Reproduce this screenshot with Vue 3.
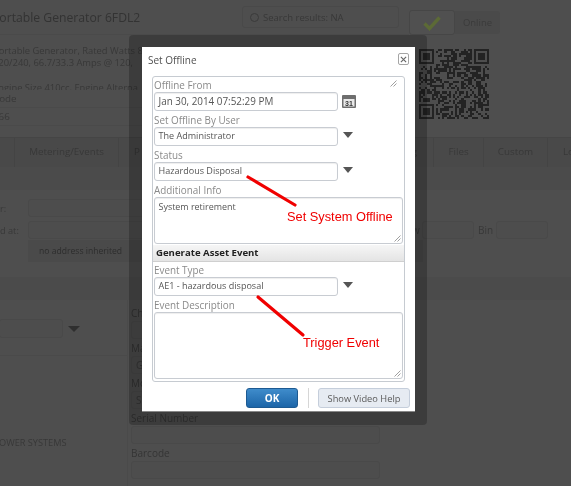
<script setup>
const size = 33
function finder(x, y) {
  return (r, c) => {
    const dx = c - x, dy = r - y
    if (dx < -1 || dy < -1 || dx > 7 || dy > 7) return null
    if (dx < 0 || dy < 0 || dx > 6 || dy > 6) return false
    if (dx === 0 || dy === 0 || dx === 6 || dy === 6) return true
    if (dx === 1 || dy === 1 || dx === 5 || dy === 5) return false
    return true
  }
}
const finders = [finder(0, 0), finder(26, 0), finder(0, 26)]
let seed = 7919
function rand() {
  seed = (seed * 16807) % 2147483647
  return seed / 2147483647
}
const modules = []
for (let r = 0; r < size; r++) {
  for (let c = 0; c < size; c++) {
    let v = null
    for (const f of finders) {
      const res = f(r, c)
      if (res !== null) v = res
    }
    if (v === null) v = rand() > 0.5
    if (v) modules.push({ x: c, y: r })
  }
}
</script>

<template>
  <div class="page">
    <section class="head">
      <div class="head-left">
        <div class="title-row">
          <h1 class="title">Portable Generator 6FDL2</h1>
          <div class="search">
            <span class="ring"></span>
            <span>Search results: NA</span>
          </div>
        </div>
        <p class="desc">Portable Generator, Rated Watts 8<br />120/240, 66.7/33.3 Amps @ 120,</p>
        <p class="desc engine">Engine Size 410cc, Engine Alterna</p>
        <div class="meta">Code</div>
        <div class="meta">466</div>
      </div>
      <div class="head-right">
        <div class="status">
          <div class="check">
            <svg width="20" height="16" viewBox="0 0 20 16"><path d="M2.5 8.5 L7.5 13.5 L17.5 2.5" fill="none" stroke="#5c6a36" stroke-width="3.4" /></svg>
          </div>
          <div class="online">Online</div>
        </div>
        <svg class="qr" width="70" height="70" viewBox="0 0 33 33" shape-rendering="crispEdges">
          <rect v-for="(m, i) in modules" :key="i" :x="m.x" :y="m.y" width="1" height="1" fill="#232323" />
        </svg>
      </div>
    </section>

    <nav class="tabs">
      <span class="tab" style="width: 15px"></span>
      <span class="tab" style="width: 104px">Metering/Events</span>
      <span class="tab wide"><span>P</span><span>g</span></span>
      <span class="tab" style="width: 50px">Files</span>
      <span class="tab" style="width: 64px">Custom</span>
      <span class="tab last">Location</span>
    </nav>
    <div class="band top-band"></div>

    <section class="form">
      <div class="row">
        <span class="row-label">r:</span>
        <span class="box main-box"></span>
      </div>
      <div class="row second">
        <span class="row-label">d at:</span>
        <span class="box main-box"></span>
        <span class="row-w">w</span>
        <span class="box small-box"></span>
        <span class="bin">Bin</span>
        <span class="box small-box bin-box"></span>
      </div>
      <div class="row third">
        <span class="address">no address inherited</span>
      </div>
    </section>
    <div class="band lower-band"></div>

    <section class="lower">
      <div class="lower-left">
        <div class="lower-select">
          <span class="box select-box"></span>
          <span class="tri dark"></span>
        </div>
        <div class="panel"><span class="power">POWER SYSTEMS</span></div>
      </div>
      <div class="lower-right">
        <span class="bg-label">Ch</span><span class="box wide-box"></span>
        <span class="bg-label">Ma</span><span class="box wide-box">G</span>
        <span class="bg-label">Mo</span><span class="box wide-box">S</span>
        <span class="bg-label">Serial Number</span><span class="box wide-box"></span>
        <span class="bg-label">Barcode</span><span class="box wide-box"></span>
      </div>
    </section>

    <div class="frame">
      <div class="modal">
        <header class="modal-head">
          <span>Set Offline</span>
          <button class="close" aria-label="Close">
            <svg width="7" height="7" viewBox="0 0 8 8"><path d="M1 1 L7 7 M7 1 L1 7" stroke="#666" stroke-width="1.3" /></svg>
          </button>
        </header>

        <div class="fields">
          <svg class="grip top-grip" width="7" height="7" viewBox="0 0 7 7"><path d="M0.5 6.5 L6.5 0.5 M3.5 6.5 L6.5 3.5" stroke="#888" stroke-width="0.8" /></svg>

          <div class="group first">
            <label>Offline From</label>
            <div class="line">
              <div class="input date">Jan 30, 2014 07:52:29 PM</div>
              <svg class="cal" width="14" height="13" viewBox="0 0 14 13">
                <rect x="0" y="0" width="14" height="13" rx="1" fill="#6e6e6e" />
                <rect x="1.5" y="4" width="11" height="7.5" fill="#e9e9e9" />
                <text x="7" y="10.6" font-size="7" font-weight="700" text-anchor="middle" fill="#333" font-family="Liberation Sans, sans-serif">31</text>
              </svg>
            </div>
          </div>

          <div class="group">
            <label>Set Offline By User</label>
            <div class="line">
              <div class="input">The Administrator</div>
              <span class="tri"></span>
            </div>
          </div>

          <div class="group">
            <label>Status</label>
            <div class="line">
              <div class="input">Hazardous Disposal</div>
              <span class="tri"></span>
            </div>
          </div>

          <div class="group">
            <label>Additional Info</label>
            <div class="area info">System retirement
              <svg class="grip" width="7" height="7" viewBox="0 0 7 7"><path d="M0.5 6.5 L6.5 0.5 M3.5 6.5 L6.5 3.5" stroke="#888" stroke-width="0.8" /></svg>
            </div>
          </div>

          <div class="section-head">Generate Asset Event</div>

          <div class="group event">
            <label>Event Type</label>
            <div class="line">
              <div class="input">AE1 - hazardous disposal</div>
              <span class="tri"></span>
            </div>
          </div>

          <div class="group">
            <label>Event Description</label>
            <div class="area descr">
              <svg class="grip" width="7" height="7" viewBox="0 0 7 7"><path d="M0.5 6.5 L6.5 0.5 M3.5 6.5 L6.5 3.5" stroke="#888" stroke-width="0.8" /></svg>
            </div>
          </div>
        </div>

        <footer class="actions">
          <button class="ok">OK</button>
          <span class="sep"></span>
          <button class="help">Show Video Help</button>
        </footer>
      </div>
    </div>

    <svg class="marks" width="571" height="486" viewBox="0 0 571 486">
      <path d="M248 177 L295 205" stroke="#f00000" stroke-width="3.2" stroke-linecap="round" />
      <path d="M258 297 L303 335" stroke="#f00000" stroke-width="3.2" stroke-linecap="round" />
    </svg>
    <span class="note note-one">Set System Offline</span>
    <span class="note note-two">Trigger Event</span>
  </div>
</template>

<style>
html, body { margin: 0; background: #4e4e4e; }
</style>

<style scoped>
.page {
  position: relative;
  width: 571px;
  height: 486px;
  overflow: hidden;
  background: #4e4e4e;
  color: #383838;
  font-family: "Open Sans", sans-serif;
  font-size: 10px;
  filter: blur(0.35px);
}
.head { display: flex; height: 137px; }
.head-left { width: 409px; flex: none; }
.head-right { flex: 1; padding-top: 10px; }
.title-row { display: flex; height: 34px; border-bottom: 1px solid #4a4a4a; align-items: center; margin-bottom: 10px; }
.title {
  margin: 0 0 0 -8px;
  width: 250px;
  flex: none;
  font-size: 12.2px;
  font-weight: 400;
  color: #333;
  white-space: nowrap;
}
.search {
  box-sizing: border-box;
  width: 157px;
  height: 22px;
  border: 1px solid #494949;
  border-radius: 3px;
  display: flex;
  align-items: center;
  gap: 4px;
  padding-left: 7px;
  font-size: 9.5px;
}
.ring { width: 7px; height: 7px; border: 1.5px solid #3a3a3a; border-radius: 50%; }
.desc {
  margin: 0 0 0 -7px;
  font-size: 9.4px;
  line-height: 12px;
  white-space: nowrap;
}
.engine { margin-top: 14px; height: 7px; overflow: hidden; line-height: 9px; }
.meta {
  height: 17px;
  line-height: 17px;
  margin-left: -7px;
  border-bottom: 1px solid #4a4a4a;
  font-size: 9.8px;
}
.status { display: flex; align-items: center; height: 25px; }
.check {
  box-sizing: border-box;
  width: 46px;
  height: 25px;
  border: 1px solid #464646;
  border-radius: 3px;
  background: #505050;
  display: flex;
  align-items: center;
  justify-content: center;
}
.online {
  box-sizing: border-box;
  width: 45px;
  height: 23px;
  background: #4a4a4a;
  border-radius: 0 3px 3px 0;
  text-align: center;
  line-height: 23px;
  color: #3b3b3b;
  font-size: 9.5px;
}
.qr { display: block; margin: 14px 0 0 10px; }
.tabs {
  display: flex;
  height: 30px;
  background: #494949;
  border-top: 1px solid #454545;
  box-sizing: border-box;
}
.tab {
  flex: none;
  box-sizing: border-box;
  border-right: 1px solid #444;
  text-align: center;
  line-height: 28px;
  white-space: nowrap;
  font-size: 9.8px;
}
.tab.wide { width: 315px; display: flex; justify-content: space-between; padding: 0 16px 0 15px; }
.tab.last { width: 40px; border-right: 0; text-align: left; padding-left: 15px; }
.band { background: #4b4b4b; }
.top-band { height: 23px; }
.form { height: 87px; padding-top: 9px; box-sizing: border-box; }
.row { display: flex; align-items: center; height: 18px; }
.row.second { margin-top: 4px; }
.row.third { margin-top: 1px; height: 22px; }
.row-label { width: 28px; flex: none; white-space: nowrap; font-size: 9.2px; }
.box {
  box-sizing: border-box;
  display: block;
  height: 18px;
  border: 1px solid #494949;
  border-radius: 3px;
  background: #4d4d4d;
  flex: none;
  padding-left: 4px;
  line-height: 16px;
}
.main-box { width: 384px; }
.row-w { width: 10px; flex: none; }
.small-box { width: 52px; }
.bin { margin-left: 4px; width: 18px; flex: none; }
.bin-box { width: 52px; }
.address {
  margin-left: 28px;
  width: 395px;
  height: 22px;
  background: #4a4a4a;
  padding-left: 11px;
  box-sizing: border-box;
  line-height: 22px;
  font-size: 8.6px;
  color: #2d2d2d;
}
.lower-band { height: 23px; }
.lower { display: flex; height: 186px; }
.lower-left { width: 128px; flex: none; border-right: 1px solid #4a4a4a; box-sizing: border-box; }
.lower-select { display: flex; align-items: center; margin-top: 19px; height: 19px; }
.select-box { width: 64px; height: 19px; margin-left: -1px; }
.tri { flex: none; width: 0; height: 0; margin-left: 5px; border-left: 5.5px solid transparent; border-right: 5.5px solid transparent; border-top: 6px solid #555; }
.tri.dark { border-top-color: #2f2f2f; border-left-width: 6px; border-right-width: 6px; }
.panel { border-top: 1px solid #4a4a4a; margin-top: 17px; padding-top: 80px; }
.power { font-size: 9.2px; margin-left: -6.5px; white-space: nowrap; display: block; line-height: 14px; }
.lower-right { display: flex; flex-direction: column; padding: 4px 0 0 3px; }
.bg-label { height: 15px; line-height: 14px; margin-top: 2px; color: #353535; }
.wide-box { width: 249px; }

.frame {
  position: absolute;
  left: 129px;
  top: 35px;
  width: 298px;
  height: 390px;
  box-sizing: border-box;
  padding: 12px 12px 13px 13px;
  background: rgba(0, 0, 0, 0.22);
  border-radius: 4px;
}
.modal {
  box-sizing: border-box;
  height: 365px;
  background: #fff;
  border-bottom: 1px solid #888;
  padding: 0 5px 0 10px;
  color: #555;
  display: flex;
  flex-direction: column;
}
.modal-head {
  display: flex;
  justify-content: space-between;
  align-items: flex-start;
  height: 29px;
  padding-top: 6px;
  box-sizing: border-box;
  font-size: 10px;
  color: #505050;
  margin-left: -4px;
  line-height: 15px;
}
.close {
  box-sizing: border-box;
  width: 11px;
  height: 12px;
  padding: 0;
  margin-right: 1px;
  background: #fff;
  border: 1px solid #a5a5a5;
  border-radius: 2px;
  display: flex;
  align-items: center;
  justify-content: center;
}
.fields {
  position: relative;
  box-sizing: border-box;
  width: 253px;
  height: 306px;
  padding: 1px 1px 0 1px;
  border: 1px solid #c6cbd1;
  border-radius: 3px;
  flex: none;
}
.top-grip { position: absolute; right: 7px; top: 3px; }
.group { margin-top: 2.5px; }
.group.first { margin-top: 0; }
.group.event { margin-top: 1px; }
label { display: block; height: 14px; line-height: 14px; color: #8a8a8a; font-size: 9.9px; white-space: nowrap; }
.line { display: flex; align-items: center; }
.input {
  box-sizing: border-box;
  width: 184px;
  height: 18.5px;
  flex: none;
  border: 1px solid #c8ccd2;
  border-radius: 3px;
  padding-left: 3.5px;
  line-height: 16.5px;
  font-size: 9.05px;
  color: #555;
  white-space: nowrap;
  box-shadow: inset 0 1px 1px #eee;
}
.input.date { font-size: 9.9px; }
.line .tri { margin-left: 5px; margin-top: -3px; }
.cal { margin-left: 4px; }
.area {
  position: relative;
  box-sizing: border-box;
  width: 248.5px;
  border: 1px solid #c8ccd2;
  border-radius: 3px;
  padding: 1px 3.5px;
  font-size: 8.95px;
  line-height: 15px;
  color: #555;
  box-shadow: inset 0 1px 1px #eee;
}
.area .grip { position: absolute; right: 1px; bottom: 1px; }
.info { height: 47px; }
.descr { height: 67px; }
.section-head {
  margin: 1px -1px 0 -1px;
  height: 16px;
  line-height: 16px;
  padding-left: 3px;
  background: linear-gradient(#f6f6f6, #e4e4e4);
  border-bottom: 1px solid #cfcfcf;
  font-size: 9.6px;
  font-weight: 700;
  color: #222;
}
.actions { display: flex; align-items: center; height: 20px; margin-top: 6px; margin-left: 94px; }
.ok {
  width: 52px;
  height: 20px;
  padding: 0;
  border: 1px solid #1d5a92;
  border-radius: 3px;
  background: linear-gradient(#3f8ccb, #1c65a8);
  color: #fff;
  font: 700 10px "Open Sans", sans-serif;
}
.sep { width: 1px; height: 20px; background: #d6d6d6; margin: 0 9px 0 10px; }
.help {
  width: 92px;
  height: 20px;
  padding: 0;
  border: 1px solid #c5cedb;
  border-radius: 3px;
  background: #e6ebf2;
  color: #5a5a5a;
  font: 9.3px "Open Sans", sans-serif;
  white-space: nowrap;
}
.marks { position: absolute; left: 0; top: 0; pointer-events: none; }
.note {
  position: absolute;
  color: #f00000;
  font-family: "Liberation Sans", sans-serif;
  font-size: 12.8px;
  line-height: 14px;
  white-space: nowrap;
}
.note-one { left: 287px; top: 210px; }
.note-two { left: 303px; top: 336px; }
</style>
